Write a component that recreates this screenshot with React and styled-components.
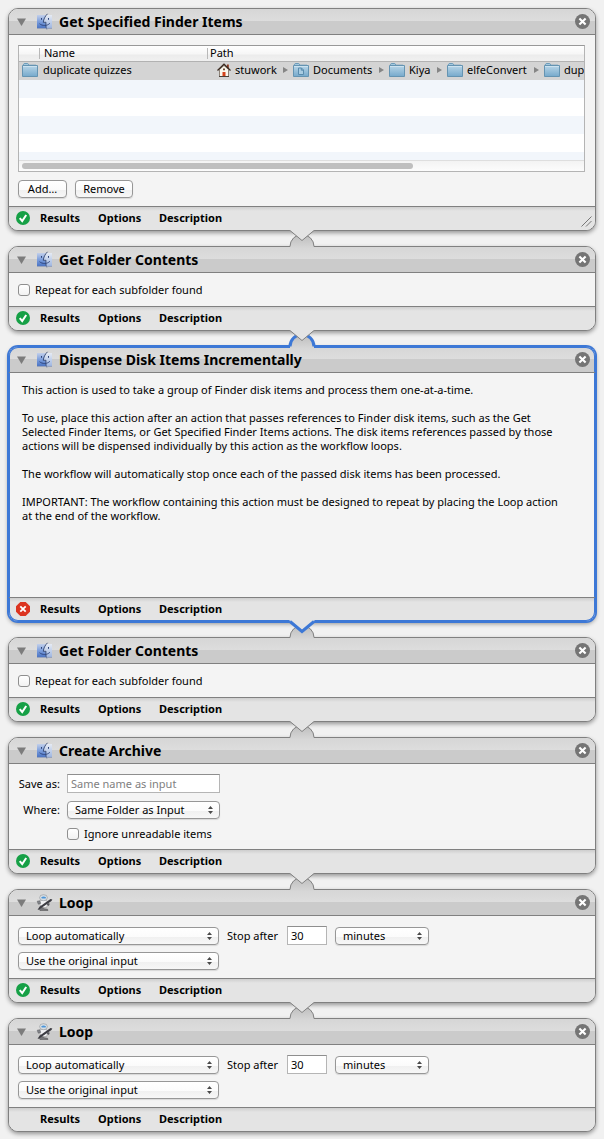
import React, { useId } from "react";
import styled, { createGlobalStyle, css } from "styled-components";

const BORDER = "#808080";
const BLUE = "#3d78d6";
const FONT = '"Noto Sans", "Open Sans", sans-serif';

const GlobalStyle = createGlobalStyle`
  * { box-sizing: border-box; }
  body { margin: 0; background: #f1f1f1; color: #000; font: 11px/14px ${FONT}; }
  button, input, select { font: inherit; color: inherit; margin: 0; }
`;

const Workflow = styled.main`
  display: flex;
  flex-direction: column;
  gap: 15px;
  padding: 8px 8px 7px;
`;

const Card = styled.section`
  position: relative;
  border: 1px solid ${(p) => (p.$selected ? BLUE : BORDER)};
  border-radius: 10px;
  background: #f4f4f4;
  box-shadow: ${(p) => (p.$selected ? `0 0 0 1px ${BLUE}, inset 0 0 0 1px ${BLUE}, ` : "")}0 2px 4px rgba(0, 0, 0, 0.38);
`;

const Header = styled.header`
  display: flex;
  align-items: center;
  height: 26px;
  padding: 0 5px 0 8px;
  border-bottom: 1px solid ${BORDER};
  border-radius: 9px 9px 0 0;
  background: linear-gradient(#d6d6d6, #dddddd 12px, #cbcbcb 12px, #cbcbcb);
  ${(p) => p.$selected && css`box-shadow: inset 0 1px ${BLUE}, inset 1px 0 ${BLUE}, inset -1px 0 ${BLUE};`}
`;

const Title = styled.h2`
  flex: 1;
  margin: 0 0 0 6px;
  font-size: 14px;
  line-height: 20px;
  font-weight: 700;
`;

const IconButton = styled.button`
  display: flex;
  padding: 0;
  border: 0;
  background: none;
`;

const IconSlot = styled.span`
  display: flex;
  margin-left: 10px;
`;

const Body = styled.div`
  min-height: ${(p) => p.$height || 0}px;
  padding: 10px 10px 8px 9px;
`;

const Footer = styled.footer`
  display: flex;
  align-items: center;
  height: 24px;
  padding: 0 3px 1px 7px;
  border-top: 1px solid ${BORDER};
  border-radius: 0 0 9px 9px;
  background: linear-gradient(#cecece, #e4e4e4 4px);
  ${(p) => p.$selected && css`box-shadow: inset 0 -1px ${BLUE}, inset 1px 0 ${BLUE}, inset -1px 0 ${BLUE};`}
`;

const StatusSlot = styled.span`
  display: flex;
  width: 14px;
  margin-right: 10px;
`;

const FooterTab = styled.button`
  width: ${(p) => p.$width}px;
  padding: 0;
  border: 0;
  background: none;
  text-align: left;
  font-weight: 700;
`;

const Grip = styled.svg`
  margin: 6px 0 0 auto;
`;

const Pointer = styled.svg`
  position: absolute;
  z-index: 1;
  top: calc(100% - 2px);
  left: 50%;
  margin-left: -15px;
`;

const Bump = styled.svg`
  position: absolute;
  bottom: calc(100% - 1px);
  left: 50%;
  margin-left: -15px;
`;

const Disclosure = () => (
  <svg width="9" height="8" viewBox="0 0 9 8" aria-hidden="true">
    <path d="M0 .5h9L4.500 8z" fill="#7c7c7c" />
  </svg>
);

const CloseIcon = () => (
  <svg width="15" height="15" viewBox="0 0 15 15" aria-hidden="true">
    <circle cx="7.500" cy="7.500" r="7.500" fill="#757575" />
    <path d="M4.400 4.400l6.200 6.200m0-6.200l-6.200 6.200" stroke="#fff" strokeWidth="2.100" />
  </svg>
);

function FinderIcon() {
  const id = useId();
  return (
    <svg width="17" height="18" viewBox="0 0 17 18" aria-hidden="true">
      <defs>
        <linearGradient id={`${id}l`} x1="0" y1="0" x2="0" y2="1">
          <stop offset="0" stopColor="#c3d0ea" />
          <stop offset=".5" stopColor="#7d9fdd" />
          <stop offset="1" stopColor="#4a74c4" />
        </linearGradient>
        <linearGradient id={`${id}r`} x1="0" y1="0" x2="0" y2="1">
          <stop offset="0" stopColor="#e6ebf4" />
          <stop offset="1" stopColor="#9fb7e2" />
        </linearGradient>
      </defs>
      <path d="M1 2h9C8.500 4.500 8 7 8 9.500h2c-.3 2.500-.2 3.500.4 5.500H1z" fill={`url(#${id}l)`} />
      <path d="M10 2h6v13h-5.600c-.6-2-.7-3-.4-5.500H8C8 7 8.500 4.500 10 2z" fill={`url(#${id}r)`} />
      <path d="M11.500 .8C9 3.200 7.600 6.300 7.300 9.300H10c-.3 2.700-.2 4.700.8 7" fill="none" stroke="#33466f" strokeWidth=".9" />
      <path d="M5.500 5v1.800M12.500 5v1.800" stroke="#2c4379" strokeWidth="1" />
      <path d="M3.500 10.700c2.800 2.400 7.600 2.400 10.400-.4" fill="none" stroke="#2c4379" strokeWidth=".9" />
      <path d="M1 15.400h15" stroke="#8494b8" strokeWidth=".8" />
    </svg>
  );
}

const RobotIcon = () => (
  <svg width="17" height="18" viewBox="0 0 17 18" aria-hidden="true">
    <path d="M3.500 7l3.500-1 4 .8.800 3.200-1.300 3.500H5.500L4 10.500z" fill="#eff0f2" stroke="#8a8a8c" strokeWidth=".5" />
    <path d="M1.200 7.200l2.600-.4.900 2.600-2.400.8z" fill="#85878c" stroke="#55565a" strokeWidth=".5" />
    <path d="M2.500 15l3.500-1.500 2.500 1.300 3 .4.500 1.300H4z" fill="#77777b" stroke="#4a4a4a" strokeWidth=".5" />
    <ellipse cx="7.500" cy="3.700" rx="3.900" ry="3" fill="#d9dfe4" stroke="#85898d" strokeWidth=".5" />
    <path d="M5.200 3.200c1.500-1 3.300-1 4.800 0l-.4 1.400H5.800z" fill="#4c95d8" />
    <path d="M1.500 16l2-3.200L14.500 5l1.800.5-.8 1.600L4.500 14.500z" fill="#3b3b42" />
    <path d="M11.800 9l2 .8-1 2.200-2-1.200z" fill="#55565c" />
  </svg>
);

const SuccessIcon = () => (
  <svg width="14" height="14" viewBox="0 0 14 14" role="img" aria-label="Succeeded">
    <circle cx="7" cy="7" r="7" fill="#16a046" />
    <path d="M3.700 7.200l2.500 2.800 4-6" fill="none" stroke="#fff" strokeWidth="2" />
  </svg>
);

const FailIcon = () => (
  <svg width="14" height="14" viewBox="0 0 14 14" role="img" aria-label="Failed">
    <path d="M4.300 0h5.400L14 4.300v5.400L9.700 14H4.300L0 9.700V4.300z" fill="#dc3420" />
    <path d="M4.300 4.300l5.400 5.400m0-5.400L4.300 9.700" stroke="#fff" strokeWidth="1.800" />
  </svg>
);

function FolderIcon({ doc }) {
  const id = useId();
  return (
    <svg width="16" height="14" viewBox="0 0 16 14" aria-hidden="true">
      <defs>
        <linearGradient id={id} x1="0" y1="0" x2="0" y2="1">
          <stop offset="0" stopColor="#b9d6e8" />
          <stop offset="1" stopColor="#76a9cb" />
        </linearGradient>
      </defs>
      <path d="M1.500 3V1.200l.7-.7h3.600l.7.7v1h7.500V4" fill="#a4c8de" stroke="#6d9cba" />
      <path d="M.5 2.500h15v11H.5z" fill={`url(#${id})`} stroke="#6594b2" />
      <path d="M1 3.500h14" stroke="#d3e6f1" strokeWidth=".8" />
      {doc && <path d="M5.500 5h3l2 2v4.500h-5zM8.300 5v2.200h2.200" fill="#a9cce2" stroke="#5a8cad" />}
    </svg>
  );
}

const HomeIcon = () => (
  <svg width="14" height="14" viewBox="0 0 14 14" aria-hidden="true">
    <path d="M2.500 6.500L7 2.500l4.500 4v7h-9z" fill="#fbf8ee" stroke="#73685c" strokeWidth=".8" />
    <path d="M10 1.500h1.800v4L10 4z" fill="#8c3a22" />
    <path d="M.5 7.500L7 1.200l6.500 6.300" fill="none" stroke="#3c2c22" strokeWidth="1.300" />
    <path d="M5.500 9h3v4.500h-3z" fill="#d3431c" />
    <path d="M6 5.500h2v1.700H6z" fill="#6c4b38" />
    <path d="M2 13.500h10" stroke="#4a4038" />
  </svg>
);

const CrumbArrow = () => (
  <svg width="5" height="6" viewBox="0 0 5 6" aria-hidden="true">
    <path d="M0 0l5 3-5 3z" fill="#858585" />
  </svg>
);

function CardBump({ line, lineWidth }) {
  const id = useId();
  return (
    <Bump width="30" height="15" viewBox="0 0 30 15" aria-hidden="true">
      <defs>
        <linearGradient id={id} x1="0" y1="0" x2="0" y2="1">
          <stop offset="0" stopColor="#bdbdbd" />
          <stop offset="1" stopColor="#d6d6d6" />
        </linearGradient>
      </defs>
      <path d="M3 15v-1.500A12 12 0 0 1 27 13.500v1.500z" fill={`url(#${id})`} />
      <path d="M3 13.500A12 12 0 0 1 27 13.500" fill="none" stroke={line} strokeWidth={lineWidth} />
    </Bump>
  );
}

function Action({ title, icon = "finder", status = "ok", selected, height, first, last, grip, children }) {
  const line = selected ? BLUE : BORDER;
  const lineWidth = selected ? 3 : 1;
  return (
    <Card $selected={selected}>
      {!first && <CardBump line={line} lineWidth={lineWidth} />}
      <Header $selected={selected}>
        <IconButton aria-label={`Collapse ${title}`}>
          <Disclosure />
        </IconButton>
        <IconSlot>{icon === "finder" ? <FinderIcon /> : <RobotIcon />}</IconSlot>
        <Title>{title}</Title>
        <IconButton aria-label={`Remove ${title}`}>
          <CloseIcon />
        </IconButton>
      </Header>
      <Body $height={height}>{children}</Body>
      <Footer $selected={selected}>
        <StatusSlot>
          {status === "ok" && <SuccessIcon />}
          {status === "fail" && <FailIcon />}
        </StatusSlot>
        <FooterTab $width={58}>Results</FooterTab>
        <FooterTab $width={61}>Options</FooterTab>
        <FooterTab $width={72}>Description</FooterTab>
        {grip && (
          <Grip width="11" height="11" viewBox="0 0 11 11" aria-hidden="true">
            <path d="M.5 10.500l10-10M5 10.500l5.500-5.500" stroke="#777" fill="none" />
          </Grip>
        )}
      </Footer>
      {!last && (
        <Pointer width="30" height="16" viewBox="0 0 30 16" aria-hidden="true">
          <path d="M2 0h26l-1 2.500L15 12.500 3 2.500z" fill="#e4e4e4" />
          <path d="M3 2.500l12 10 12-10" fill="none" stroke={line} strokeWidth={lineWidth} />
        </Pointer>
      )}
    </Card>
  );
}

const ListFrame = styled.div`
  border: 1px solid #b4b4b4;
  border-top-color: #999;
  background: #fff;
  overflow: hidden;
`;

const ItemTable = styled.table`
  width: 100%;
  table-layout: fixed;
  border-collapse: separate;
  border-spacing: 0;
`;

const HeadCell = styled.th`
  position: relative;
  width: ${(p) => (p.$width ? `${p.$width}px` : "auto")};
  height: 16px;
  padding: 0 0 2px ${(p) => p.$indent || 0}px;
  border-bottom: 1px solid #b2b2b2;
  background: linear-gradient(#fff, #f6f6f6 8px, #ececec 9px, #f0f0f0);
  font-weight: 400;
  text-align: left;
  line-height: 13px;
  ${(p) => p.$divided && css`
    &::before {
      content: "";
      position: absolute;
      left: 0;
      top: 2px;
      height: 11px;
      border-left: 1px solid #b8b8b8;
    }
  `}
`;

const ItemRow = styled.tr`
  background: ${(p) => (p.$selected ? "#d4d4d4" : p.$striped ? "#f2f6fb" : "#fff")};
`;

const Cell = styled.td`
  height: ${(p) => p.$height || 18}px;
  padding: 0 0 2px ${(p) => p.$indent || 0}px;
  overflow: hidden;
  white-space: nowrap;
  vertical-align: middle;
  line-height: 14px;
  svg { display: block; flex: none; }
`;

const Crumbs = styled.div`
  display: flex;
  align-items: center;
`;

const Crumb = styled.span`
  flex: none;
  display: flex;
  align-items: center;
  gap: 4px;
  width: ${(p) => p.$width}px;
`;

const CrumbName = styled.span`
  flex: 1;
`;

const ArrowSlot = styled.span`
  margin-right: 5px;
`;

const ScrollTrack = styled.div`
  height: 11px;
  padding: 2px 3px;
  border-top: 1px solid #dedede;
  background: linear-gradient(#f3f3f3, #fcfcfc);
`;

const ScrollThumb = styled.div`
  width: 70%;
  height: 6px;
  border-radius: 3px;
  background: #bfbfbf;
`;

const ButtonRow = styled.div`
  display: flex;
  gap: 8px;
  padding-top: 8px;
`;

const controlFace = css`
  height: 18px;
  border: 1px solid #979797;
  border-radius: 4px;
  background: linear-gradient(#fff, #fbfbfb 9px, #f0f0f0 9px, #f7f7f7);
  box-shadow: 0 1px 1px rgba(0, 0, 0, 0.12);
`;

const PushButton = styled.button`
  ${controlFace}
  min-width: ${(p) => p.$width}px;
  padding: 0;
  line-height: 14px;
`;

const CheckLabel = styled.label`
  display: flex;
  align-items: center;
  gap: 5px;
  line-height: 14px;
`;

const CheckBox = styled.input`
  appearance: none;
  width: 12px;
  height: 12px;
  border: 1px solid #8f8f8f;
  border-radius: 3px;
  background: linear-gradient(#fff, #f2f2f2);
`;

const TextInput = styled.input`
  width: ${(p) => p.$width}px;
  height: 19px;
  padding: 0 3px;
  border: 1px solid #b5b5b5;
  border-top-color: #8e8e8e;
  border-radius: 0;
  background: #fff;
  outline: 0;
  &::placeholder { color: #808080; opacity: 1; }
`;

const SelectWrap = styled.span`
  position: relative;
  display: flex;
  width: ${(p) => p.$width}px;
  svg { position: absolute; right: 7px; top: 5px; pointer-events: none; }
`;

const SelectBox = styled.select`
  ${controlFace}
  appearance: none;
  width: 100%;
  padding: 0 16px 0 7px;
  line-height: 16px;
`;

function PopUp({ id, label, width, value }) {
  return (
    <SelectWrap $width={width}>
      <SelectBox id={id} aria-label={label} defaultValue={value}>
        <option>{value}</option>
      </SelectBox>
      <svg width="5" height="8" viewBox="0 0 5 8" aria-hidden="true">
        <path d="M0 3l2.500-3L5 3zM0 5h5L2.500 8z" fill="#4a4a4a" />
      </svg>
    </SelectWrap>
  );
}

const Prose = styled.div`
  padding: 0 24px 0 4px;
`;

const Paragraph = styled.p`
  margin: 0 0 14px;
`;

const Form = styled.div`
  display: grid;
  grid-template-columns: 42px auto;
  column-gap: 7px;
  justify-content: start;
  align-items: center;
  row-gap: 8px;
`;

const FieldLabel = styled.label`
  justify-self: end;
  white-space: nowrap;
`;

const FormCheck = styled.div`
  grid-column: 2;
`;

const LoopRows = styled.div`
  display: flex;
  flex-direction: column;
  gap: 7px;
`;

const LoopRow = styled.div`
  display: flex;
  align-items: center;
  gap: 8px;
`;

const StopLabel = styled.label`
  width: 52px;
  white-space: nowrap;
`;

const CRUMBS = [
  { name: "stuwork", width: 76, icon: <HomeIcon /> },
  { name: "Documents", width: 96, icon: <FolderIcon doc /> },
  { name: "Kiya", width: 58, icon: <FolderIcon /> },
  { name: "elfeConvert", width: 97, icon: <FolderIcon /> },
  { name: "dup", width: 60, icon: <FolderIcon />, end: true },
];

const EMPTY_ROWS = [18, 18, 18, 18, 8];

function FinderItems() {
  return (
    <Action title="Get Specified Finder Items" height={171} first grip>
      <ListFrame>
        <ItemTable>
          <thead>
            <tr>
              <HeadCell $width={20} aria-label="Icon" />
              <HeadCell $width={168} $indent={5} $divided>Name</HeadCell>
              <HeadCell $indent={3} $divided>Path</HeadCell>
            </tr>
          </thead>
          <tbody>
            <ItemRow $selected>
              <Cell $indent={3}><FolderIcon /></Cell>
              <Cell $indent={4}>duplicate quizzes</Cell>
              <Cell $indent={10}>
                <Crumbs>
                  {CRUMBS.map((c) => (
                    <Crumb key={c.name} $width={c.width}>
                      {c.icon}
                      <CrumbName>{c.name}</CrumbName>
                      {!c.end && <ArrowSlot><CrumbArrow /></ArrowSlot>}
                    </Crumb>
                  ))}
                </Crumbs>
              </Cell>
            </ItemRow>
            {EMPTY_ROWS.map((h, i) => (
              <ItemRow key={i} $striped={i % 2 === 0}>
                <Cell colSpan={3} $height={h} />
              </ItemRow>
            ))}
          </tbody>
        </ItemTable>
        <ScrollTrack><ScrollThumb /></ScrollTrack>
      </ListFrame>
      <ButtonRow>
        <PushButton $width={49}>Add…</PushButton>
        <PushButton $width={58}>Remove</PushButton>
      </ButtonRow>
    </Action>
  );
}

function FolderContents() {
  return (
    <Action title="Get Folder Contents" height={33}>
      <CheckLabel>
        <CheckBox type="checkbox" />
        Repeat for each subfolder found
      </CheckLabel>
    </Action>
  );
}

function Loop({ status, last }) {
  const id = useId();
  return (
    <Action title="Loop" icon="robot" status={status} height={62} last={last}>
      <LoopRows>
        <LoopRow>
          <PopUp label="Loop mode" width={201} value="Loop automatically" />
          <StopLabel htmlFor={id}>Stop after</StopLabel>
          <TextInput id={id} $width={40} defaultValue="30" />
          <PopUp label="Unit" width={94} value="minutes" />
        </LoopRow>
        <PopUp label="Input for each loop" width={201} value="Use the original input" />
      </LoopRows>
    </Action>
  );
}

export default function App() {
  return (
    <>
      <GlobalStyle />
      <Workflow>
        <FinderItems />
        <FolderContents />
        <Action title="Dispense Disk Items Incrementally" status="fail" selected height={224}>
          <Prose>
            <Paragraph>
              This action is used to take a group of Finder disk items and process them one-at-a-time.
            </Paragraph>
            <Paragraph>
              To use, place this action after an action that passes references to Finder disk items, such as the Get
              Selected Finder Items, or Get Specified Finder Items actions. The disk items references passed by those
              actions will be dispensed individually by this action as the workflow loops.
            </Paragraph>
            <Paragraph>
              The workflow will automatically stop once each of the passed disk items has been processed.
            </Paragraph>
            <Paragraph>
              IMPORTANT: The workflow containing this action must be designed to repeat by placing the Loop action at
              the end of the workflow.
            </Paragraph>
          </Prose>
        </Action>
        <FolderContents />
        <Action title="Create Archive" height={85}>
          <Form>
            <FieldLabel htmlFor="save-as">Save as:</FieldLabel>
            <TextInput id="save-as" $width={153} placeholder="Same name as input" />
            <FieldLabel htmlFor="where">Where:</FieldLabel>
            <PopUp id="where" width={153} value="Same Folder as Input" />
            <FormCheck>
              <CheckLabel>
                <CheckBox type="checkbox" />
                Ignore unreadable items
              </CheckLabel>
            </FormCheck>
          </Form>
        </Action>
        <Loop status="ok" />
        <Loop status="none" last />
      </Workflow>
    </>
  );
}
